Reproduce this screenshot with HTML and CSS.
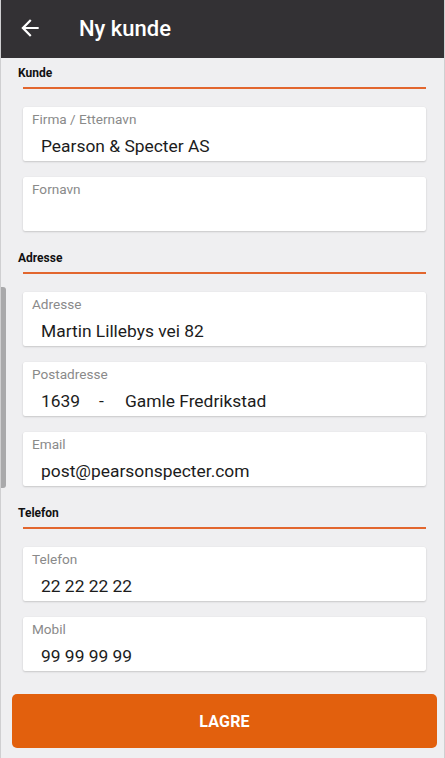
FILE: index.html
```html
<!DOCTYPE html>
<html lang="no">
<head>
<meta charset="utf-8">
<title>Ny kunde</title>
<link rel="stylesheet" href="styles.css">
</head>
<body>
<div class="screen">
  <header class="appbar">
    <svg class="back" viewBox="0 0 24 24" width="26" height="26" aria-hidden="true">
      <path d="M20 11H7.83l5.59-5.59L12 4l-8 8 8 8 1.41-1.41L7.83 13H20v-2z" fill="#ffffff"/>
    </svg>
    <h1 class="title">Ny kunde</h1>
  </header>

  <main class="content">
    <section class="section first">
      <h2 class="section-title">Kunde</h2>
      <div class="rule"></div>
      <div class="field">
        <div class="field-label">Firma / Etternavn</div>
        <div class="field-value">Pearson &amp; Specter AS</div>
      </div>
      <div class="field">
        <div class="field-label">Fornavn</div>
        <div class="field-value"></div>
      </div>
    </section>

    <section class="section">
      <h2 class="section-title">Adresse</h2>
      <div class="rule"></div>
      <div class="field">
        <div class="field-label">Adresse</div>
        <div class="field-value">Martin Lillebys vei 82</div>
      </div>
      <div class="field">
        <div class="field-label">Postadresse</div>
        <div class="field-value post"><span class="zip">1639</span><span class="dash">-</span><span class="city">Gamle Fredrikstad</span></div>
      </div>
      <div class="field">
        <div class="field-label">Email</div>
        <div class="field-value">post@pearsonspecter.com</div>
      </div>
    </section>

    <section class="section">
      <h2 class="section-title">Telefon</h2>
      <div class="rule"></div>
      <div class="field">
        <div class="field-label">Telefon</div>
        <div class="field-value">22 22 22 22</div>
      </div>
      <div class="field">
        <div class="field-label">Mobil</div>
        <div class="field-value">99 99 99 99</div>
      </div>
    </section>

    <button class="save" type="button">LAGRE</button>
  </main>

  <div class="scrollbar"></div>
</div>
</body>
</html>
```

FILE: styles.css
```css
* { box-sizing: border-box; }

html, body {
  margin: 0;
  padding: 0;
  background: #efeff1;
}

body {
  font-family: Roboto, "Noto Sans", "Liberation Sans", sans-serif;
}

.screen {
  position: relative;
  width: 445px;
  height: 758px;
  overflow: hidden;
  background: #efeff1;
  border-left: 1px solid #cfcfd1;
  border-right: 1px solid #cfcfd1;
}

.appbar {
  height: 58px;
  background: #333134;
  display: flex;
  align-items: center;
  padding-left: 16px;
}

.back {
  display: block;
  margin-bottom: 3px;
}

.title {
  margin: 0 0 0 36px;
  color: #ffffff;
  font-size: 22px;
  line-height: 24px;
  font-weight: 500;
}

.content {
  padding: 0 7px 0 11px;
}

.section {
  padding: 20px 7px 0 5px;
}

.section.first {
  padding-top: 8px;
}

.section-title {
  margin: 0 0 7px 0;
  padding-left: 1px;
  font-size: 12px;
  line-height: 14px;
  font-weight: 700;
  color: #111111;
}

.rule {
  height: 2px;
  margin: 0 4px 18px 6px;
  background: #e2662e;
}

.field {
  height: 54px;
  margin: 0 4px 16px 6px;
  background: #ffffff;
  border-radius: 2px;
  box-shadow: 0 1px 2px rgba(0, 0, 0, 0.16), 0 0 1px rgba(0, 0, 0, 0.08);
  padding: 4px 0 4px 0;
}

.field:last-child {
  margin-bottom: 0;
}

.field-label {
  padding-left: 9px;
  font-size: 13.6px;
  line-height: 16px;
  color: #8a8a8a;
}

.field-value {
  margin-top: 8px;
  padding-left: 18px;
  font-size: 17.4px;
  line-height: 22px;
  height: 22px;
  color: #1c1c1c;
}

.post {
  display: flex;
}

.dash {
  margin-left: 19px;
}

.city {
  margin-left: 21px;
}

.save {
  display: block;
  width: 425px;
  height: 54px;
  margin: 23px 0 0 0;
  border: none;
  border-radius: 5px;
  background: #e2600d;
  color: #ffffff;
  font-family: Roboto, "Noto Sans", "Liberation Sans", sans-serif;
  font-size: 16px;
  font-weight: 700;
  letter-spacing: 0.2px;
  cursor: pointer;
}

.scrollbar {
  position: absolute;
  left: 0;
  top: 287px;
  width: 5px;
  height: 201px;
  background: #a9a9ab;
  border-radius: 0 3px 3px 0;
}
```
